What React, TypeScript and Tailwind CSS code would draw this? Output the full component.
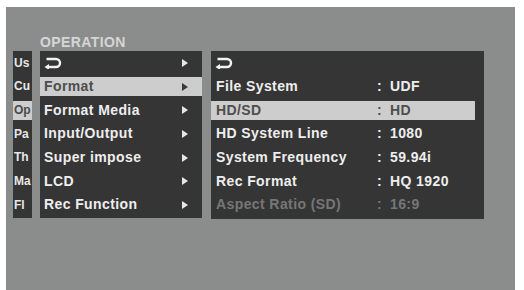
import React from "react";

// Camera menu screen: OPERATION > Format

const LEFT_TABS = ["Us", "Cu", "Op", "Pa", "Th", "Ma", "Fl"];
const ACTIVE_TAB = 2;

const MENU = ["__return", "Format", "Format Media", "Input/Output", "Super impose", "LCD", "Rec Function"];
const ACTIVE_MENU = 1;

interface Setting {
  label: string;
  value: string;
  disabled?: boolean;
}

const SETTINGS: Setting[] = [
  { label: "File System", value: "UDF" },
  { label: "HD/SD", value: "HD" },
  { label: "HD System Line", value: "1080" },
  { label: "System Frequency", value: "59.94i" },
  { label: "Rec Format", value: "HQ 1920" },
  { label: "Aspect Ratio (SD)", value: "16:9", disabled: true },
];
const ACTIVE_SETTING = 1;

function ReturnIcon() {
  return (
    <svg width="19" height="12" viewBox="0 0 19 12" aria-hidden="true">
      <path
        d="M2.5 2 H12 A4 4 0 0 1 12 10 H4"
        fill="none"
        stroke="#f2f2f2"
        strokeWidth="2.4"
        strokeLinecap="butt"
      />
      <polygon points="0.5,10 5,7 5,13" fill="#f2f2f2" />
    </svg>
  );
}

function Arrow({ dark }: { dark: boolean }) {
  return (
    <svg width="6" height="8" viewBox="0 0 6 8" aria-hidden="true">
      <polygon points="0,0 6,4 0,8" fill={dark ? "#3a3a3a" : "#e6e6e6"} />
    </svg>
  );
}

export default function App() {
  return (
    <div className="w-[524px] h-[290px] bg-white overflow-hidden font-['Liberation_Sans',Arial,sans-serif]">
      <div className="ml-[6px] mt-[7px] w-[509px] h-[283px] bg-[#8b8c8c] pt-[27px]">
        <div className="pl-[34px] h-[17px] text-[14px] leading-[17px] font-bold tracking-[0.4px] text-[#d6d6d6]">
          OPERATION
        </div>

        <div className="flex items-start mt-0 pl-[7px]">
          {/* truncated parent tabs */}
          <div className="w-[19px] h-[167px] bg-[#353535] flex flex-col">
            {LEFT_TABS.map((t, i) => (
              <div key={t} className="h-[23.7px] flex items-stretch">
                <div
                  className={
                    "w-full my-[2.5px] overflow-hidden whitespace-nowrap pl-[1px] text-[12px] leading-[18px] font-bold " +
                    (i === ACTIVE_TAB ? "bg-[#cdcdcd] text-[#4a4a4a]" : "text-[#e8e8e8]")
                  }
                >
                  {t}
                </div>
              </div>
            ))}
          </div>

          {/* menu */}
          <div className="ml-[8px] w-[162px] h-[167px] bg-[#353535] flex flex-col">
            {MENU.map((m, i) => {
              const active = i === ACTIVE_MENU;
              return (
                <div key={m} className="h-[23.7px] flex items-stretch">
                  <div
                    className={
                      "w-full my-[2.5px] flex items-center justify-between pl-[4px] pr-[14px] text-[14px] font-bold tracking-[0.4px] " +
                      (active ? "bg-[#cdcdcd] text-[#4e4e4e]" : "text-[#eeeeee]")
                    }
                  >
                    {m === "__return" ? <ReturnIcon /> : <span>{m}</span>}
                    <Arrow dark={active} />
                  </div>
                </div>
              );
            })}
          </div>

          {/* settings */}
          <div className="ml-[9px] w-[273px] h-[168px] bg-[#353535] flex flex-col pr-[9px]">
            <div className="h-[23.7px] flex items-center pl-[4px]">
              <ReturnIcon />
            </div>
            {SETTINGS.map((s, i) => {
              const active = i === ACTIVE_SETTING;
              const color = active ? "text-[#4e4e4e]" : s.disabled ? "text-[#767676]" : "text-[#eeeeee]";
              return (
                <div key={s.label} className="h-[23.7px] flex items-stretch">
                  <div
                    className={
                      "w-full my-[2.5px] flex items-center pl-[5px] text-[14px] font-bold tracking-[0.4px] " +
                      color +
                      (active ? " bg-[#cdcdcd]" : "")
                    }
                  >
                    <span className="w-[161px]">{s.label}</span>
                    <span className="w-[13px]">:</span>
                    <span>{s.value}</span>
                  </div>
                </div>
              );
            })}
          </div>
        </div>
      </div>
    </div>
  );
}
